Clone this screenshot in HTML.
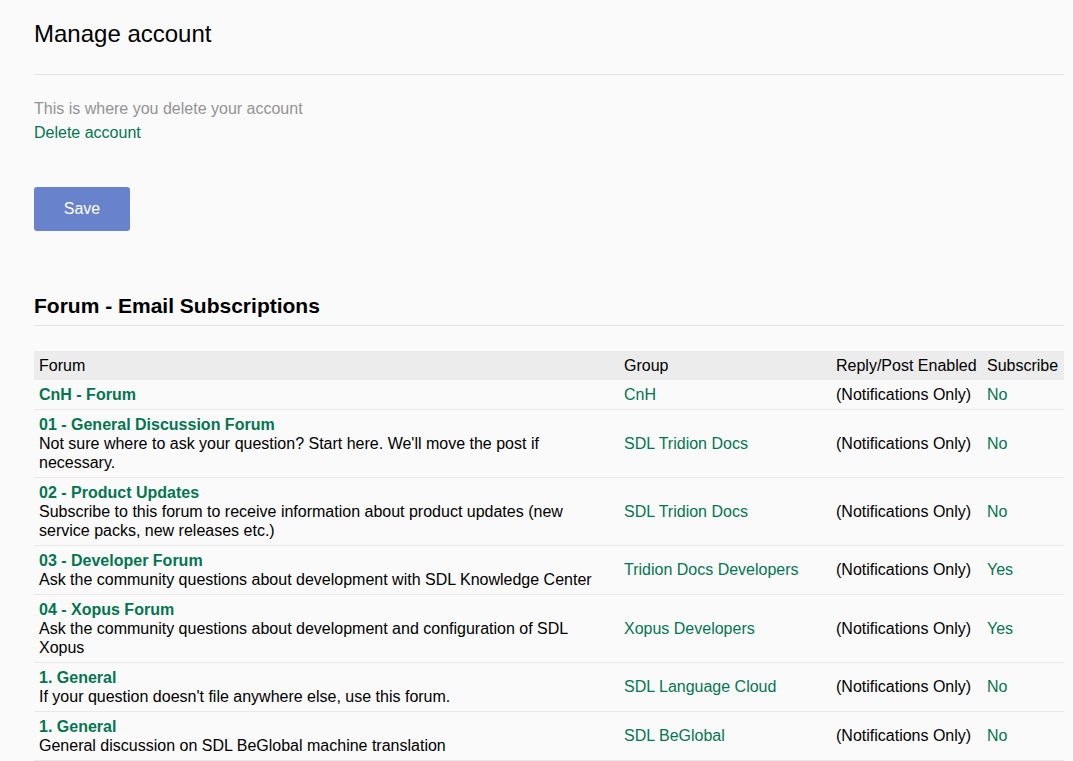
<!DOCTYPE html>
<html>
<head>
<meta charset="utf-8">
<style>
html, body { margin: 0; padding: 0; }
body {
  background: #fafafa;
  font-family: "Liberation Sans", sans-serif;
  font-size: 16px;
  color: #222;
  width: 1073px;
  height: 761px;
  overflow: hidden;
  position: relative;
}
.wrap { position: absolute; left: 34px; top: 0; width: 1030px; }
h1 {
  position: absolute; left: 0; top: 20px; margin: 0;
  font-size: 24px; font-weight: normal; line-height: 28px; color: #000;
  white-space: nowrap;
}
.hr { position: absolute; left: 0; width: 1030px; height: 1px; background: #e5e5e5; }
.gray { position: absolute; left: 0; top: 99px; line-height: 19px; color: #939393; white-space: nowrap; }
.del { position: absolute; left: 0; top: 123px; line-height: 19px; color: #047550; white-space: nowrap; }
.btn {
  position: absolute; left: 0; top: 187px; width: 96px; height: 44px;
  background: #6883cc; border-radius: 3px; color: #fff; text-align: center;
  line-height: 44px; font-size: 16px;
}
h2 {
  position: absolute; left: 0; top: 294px; margin: 0;
  font-size: 21px; font-weight: bold; line-height: 24px; color: #000;
  white-space: nowrap;
}
table {
  position: absolute; left: 0; top: 351px; width: 1030px;
  border-collapse: collapse; table-layout: fixed;
}
td, th { padding: 5px 5px; line-height: 19px; vertical-align: middle; text-align: left; font-weight: normal; }
th { background: #ececec; color: #000; }
td { border-bottom: 1px solid #e9e9e9; color: #000; }
tr.r2 td + td { padding-top: 4px; padding-bottom: 6px; }
.t { color: #047550; font-weight: bold; }
.g { color: #047550; }
</style>
</head>
<body>
<div class="wrap">
  <h1>Manage account</h1>
  <div class="hr" style="top:74px"></div>
  <div class="gray">This is where you delete your account</div>
  <div class="del">Delete account</div>
  <div class="btn">Save</div>
  <h2>Forum - Email Subscriptions</h2>
  <div class="hr" style="top:325px"></div>
  <table>
    <colgroup><col style="width:585px"><col style="width:212px"><col style="width:151px"><col style="width:82px"></colgroup>
    <tr><th>Forum</th><th>Group</th><th>Reply/Post Enabled</th><th>Subscribe</th></tr>
    <tr><td><div class="t">CnH - Forum</div></td><td class="g">CnH</td><td>(Notifications Only)</td><td class="g">No</td></tr>
    <tr><td><div class="t">01 - General Discussion Forum</div><div>Not sure where to ask your question? Start here. We'll move the post if<br>necessary.</div></td><td class="g">SDL Tridion Docs</td><td>(Notifications Only)</td><td class="g">No</td></tr>
    <tr><td><div class="t">02 - Product Updates</div><div>Subscribe to this forum to receive information about product updates (new<br>service packs, new releases etc.)</div></td><td class="g">SDL Tridion Docs</td><td>(Notifications Only)</td><td class="g">No</td></tr>
    <tr class="r2"><td><div class="t">03 - Developer Forum</div><div>Ask the community questions about development with SDL Knowledge Center</div></td><td class="g">Tridion Docs Developers</td><td>(Notifications Only)</td><td class="g">Yes</td></tr>
    <tr><td><div class="t">04 - Xopus Forum</div><div>Ask the community questions about development and configuration of SDL<br>Xopus</div></td><td class="g">Xopus Developers</td><td>(Notifications Only)</td><td class="g">Yes</td></tr>
    <tr class="r2"><td><div class="t">1. General</div><div>If your question doesn't file anywhere else, use this forum.</div></td><td class="g">SDL Language Cloud</td><td>(Notifications Only)</td><td class="g">No</td></tr>
    <tr class="r2"><td><div class="t">1. General</div><div>General discussion on SDL BeGlobal machine translation</div></td><td class="g">SDL BeGlobal</td><td>(Notifications Only)</td><td class="g">No</td></tr>
  </table>
</div>
</body>
</html>
